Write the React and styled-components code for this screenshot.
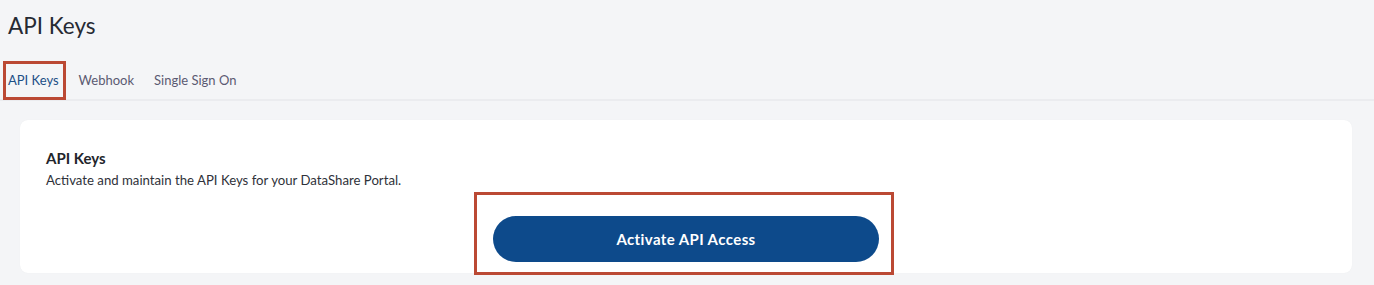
import React from "react";
import styled, { createGlobalStyle } from "styled-components";

const GlobalStyle = createGlobalStyle`
  html, body {
    margin: 0;
    padding: 0;
    background: #f4f5f7;
    font-family: Lato, "Liberation Sans", sans-serif;
    color: #2c2f36;
  }
  * { box-sizing: border-box; }
`;

const Page = styled.div`
  width: 1374px;
  height: 285px;
  overflow: hidden;
  background: #f4f5f7;
`;

const PageTitle = styled.h1`
  margin: 0;
  padding: 12px 8px 0;
  height: 61px;
  font-size: 22.5px;
  font-weight: 400;
  line-height: 28px;
  color: #262a33;
`;

const Tabs = styled.nav`
  display: flex;
  align-items: center;
  gap: 20px;
  height: 40px;
  padding: 0 8px;
  border-bottom: 2px solid #ebecef;
`;

const Tab = styled.span`
  font-size: 13px;
  line-height: 38px;
  color: ${(p) => (p.$active ? "#1c4f86" : "#5b5a72")};
  cursor: pointer;
`;

const Highlight = styled.span`
  position: relative;
  display: inline-flex;
  &::after {
    content: "";
    position: absolute;
    top: ${(p) => p.$top}px;
    right: ${(p) => p.$right}px;
    bottom: ${(p) => p.$bottom}px;
    left: ${(p) => p.$left}px;
    border: 3px solid #bb4934;
    pointer-events: none;
  }
`;

const Content = styled.main`
  padding: 19px 22px 0 20px;
`;

const Card = styled.section`
  background: #fff;
  border-radius: 8px;
  padding: 28px 26px 11px;
  box-shadow: 0 0 1px rgba(0, 0, 0, 0.06);
  display: flex;
  flex-direction: column;
`;

const CardTitle = styled.h2`
  margin: 0;
  font-size: 15px;
  font-weight: 700;
  line-height: 20px;
  color: #22252b;
`;

const CardText = styled.p`
  margin: 2px 0 0;
  font-size: 13.2px;
  line-height: 20px;
  color: #2f323a;
`;

const Actions = styled.div`
  display: flex;
  justify-content: center;
  margin-top: 26px;
`;

const PrimaryButton = styled.button`
  width: 386px;
  height: 46px;
  border: none;
  border-radius: 23px;
  background: #0d4a8b;
  color: #fff;
  font-family: inherit;
  font-size: 15px;
  font-weight: 700;
  letter-spacing: 0.4px;
  cursor: pointer;
`;

export default function App() {
  return (
    <Page>
      <GlobalStyle />
      <PageTitle>API Keys</PageTitle>
      <Tabs>
        <Highlight $top={0} $right={-7} $bottom={-1} $left={-5}>
          <Tab $active>API Keys</Tab>
        </Highlight>
        <Tab>Webhook</Tab>
        <Tab>Single Sign On</Tab>
      </Tabs>
      <Content>
        <Card>
          <CardTitle>API Keys</CardTitle>
          <CardText>
            Activate and maintain the API Keys for your DataShare Portal.
          </CardText>
          <Actions>
            <Highlight $top={-24} $right={-15} $bottom={-13} $left={-19}>
              <PrimaryButton>Activate API Access</PrimaryButton>
            </Highlight>
          </Actions>
        </Card>
      </Content>
    </Page>
  );
}
